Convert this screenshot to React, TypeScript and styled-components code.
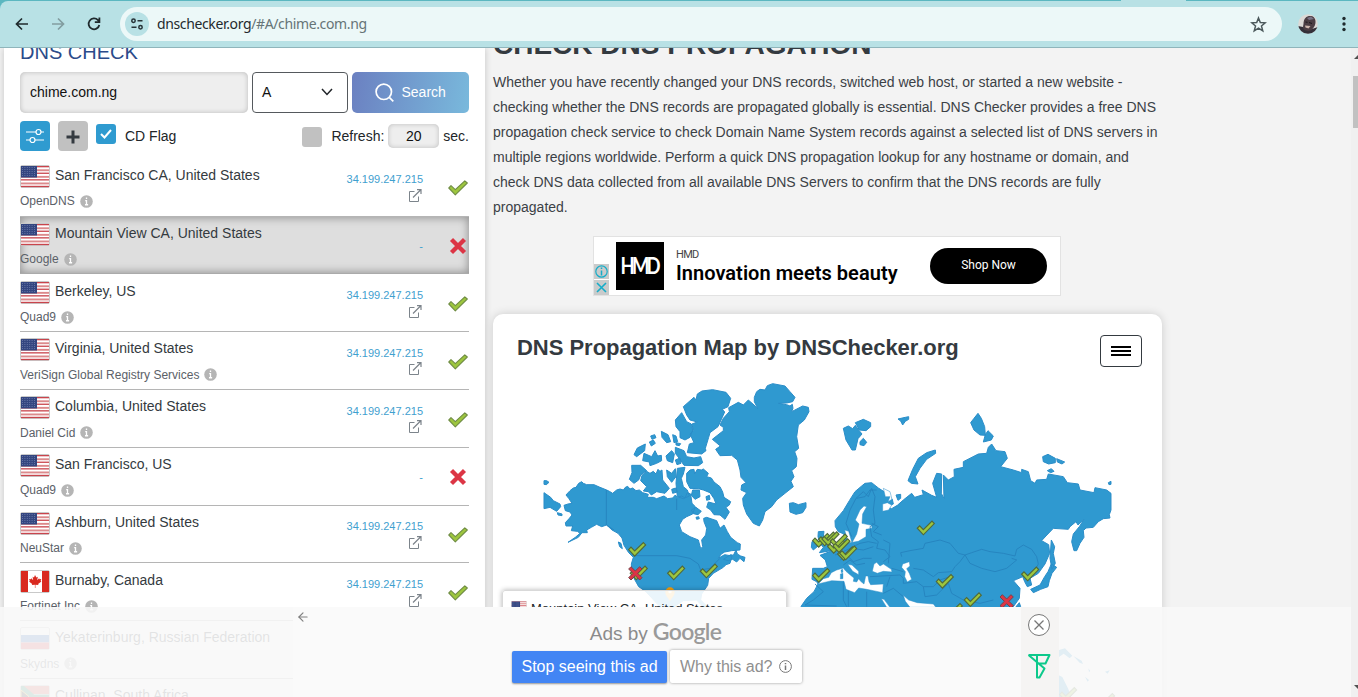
import React from 'react';
import styled, { createGlobalStyle } from 'styled-components';
import { ArrowLeft } from 'lucide-react';

const GlobalStyle = createGlobalStyle`
  * { box-sizing: border-box; }
  body { margin: 0; overflow: hidden; background: #f3f3f3; font-family: "Liberation Sans", Arial, sans-serif; font-size: 14px; color: #343a40; }
  h1, h2, h3, p { margin: 0; }
  svg { display: block; flex: none; }
`;

const Screen = styled.div`
  width: 1358px; height: 697px; overflow: hidden;
  display: flex; flex-direction: column; position: relative;
`;

/* ---------- browser bar ---------- */
const Chrome = styled.header`
  height: 48px; flex: none; background: #5bb7c0; padding-top: 1px; position: relative;
`;
const TabFoot = styled.i`
  position: absolute; left: 1121px; top: 0; width: 65px; height: 2px; background: #b8e1e5;
`;
const Toolbar = styled.div`
  height: 47px; background: #b8e1e5; border-radius: 8px 0 0 0; border-bottom: 1px solid #8fb5bb;
  display: flex; align-items: center; padding: 0 6px 0 14px;
`;
const NavIcons = styled.div`
  display: flex; gap: 20px; width: 106px; color: #1f2a2d; align-items: center;
`;
const UrlPill = styled.div`
  flex: none; width: 1162px; height: 34px; border-radius: 17px; background: #ecf8f8;
  display: flex; align-items: center; padding: 0 15px 0 5px;
`;
const SiteInfo = styled.span`
  width: 24px; height: 24px; border-radius: 50%; background: #b8e1e5; display: grid; place-items: center;
`;
const Url = styled.span`
  margin-left: 8px; flex: 1; font: 14px/20px "Noto Sans", sans-serif; color: #1f2a2d; letter-spacing: -0.37px;
  span { color: #667477; }
`;
const ToolbarEnd = styled.div`
  flex: 1; display: flex; justify-content: space-between; align-items: center; padding-left: 16px;
`;

/* ---------- page ---------- */
const Page = styled.div`
  height: 649px; overflow: hidden; display: flex; align-items: flex-start; position: relative; padding-left: 4px;
`;
const Panel = styled.section`
  width: 481px; height: 700px; padding: 0 16px; background: #fff; flex: none;
  box-shadow: 0 0 7px rgba(0,0,0,.2);
`;
const PanelTitle = styled.h2`
  margin-top: -8px; font-weight: 400; font-size: 20px; line-height: 24px; color: #2b4b8a;
`;
const SearchRow = styled.div`
  display: flex; gap: 4px; margin-top: 8px; height: 41px; color: #111;
`;
const DomainField = styled.div`
  width: 228px; padding: 0 10px; border-radius: 5px; background: #eee; line-height: 41px;
  box-shadow: inset 0 0 5px rgba(0,0,0,.22);
`;
const TypeSelect = styled.div`
  width: 96px; border: 1px solid #55595d; border-radius: 4px; padding: 0 14px 1px 9px;
  display: flex; align-items: center; justify-content: space-between;
`;
const SearchButton = styled.div`
  width: 117px; border-radius: 5px; color: #fff; background: linear-gradient(100deg, #6b80c1, #79b9dc);
  display: flex; align-items: center; gap: 8px; padding: 0 0 1px 22.5px;
`;
const OptionRow = styled.div`
  display: flex; height: 30px; margin-top: 8px; color: #212529; line-height: 30px;
`;
const SquareButton = styled.span<{ $bg: string }>`
  width: 30px; height: 30px; border-radius: 4px; background: ${p => p.$bg}; margin-right: 8px;
  display: grid; place-items: center;
`;
const CheckBox = styled.span<{ $on?: boolean }>`
  width: 20px; height: 20px; margin: ${p => (p.$on ? '3px 9px 0 0' : '6px 9px 0 auto')}; border-radius: 3px;
  background: ${p => (p.$on ? '#2f9bd0' : '#c1c1c1')}; display: grid; place-items: center;
`;
const Seconds = styled.span`
  width: 51px; height: 24px; margin: 3px 4px 0; border-radius: 5px; background: #eee; color: #111;
  text-align: center; line-height: 24px; box-shadow: inset 0 0 5px rgba(0,0,0,.2);
`;
const ServerList = styled.div`padding-top: 7.8px;`;
const Row = styled.div<{ $active?: boolean }>`
  height: 57.8px; border-bottom: 1px solid ${p => (p.$active ? '#aaa' : '#b5b5b5')}; display: flex;
  ${p => p.$active && 'background: #dedede; box-shadow: inset 0 0 9px 1px rgba(0,0,0,.34);'}
`;
const Place = styled.div`flex: 1; padding-top: 6.2px;`;
const NameLine = styled.div`
  display: flex; gap: 5px; height: 23px; line-height: 21.4px; color: #343a40; white-space: nowrap;
`;
const Provider = styled.div`
  display: flex; align-items: center; gap: 5px; height: 15px; margin-top: 6px; font-size: 12px; color: #5b6168;
`;
const Result = styled.div`
  width: 90px; padding-top: 13.7px; font-size: 11px; line-height: 14px; color: #3fa0cf; white-space: nowrap;
  display: flex; flex-direction: column; align-items: flex-end; gap: 2.5px;
  svg { margin-right: 1px; }
`;
const NoResult = styled(Result)`padding-top: 22px;`;
const Status = styled.div<{ $fail?: boolean }>`
  width: 46px; display: flex; justify-content: flex-end; align-items: center;
  padding: ${p => (p.$fail ? '2px 0 0' : '2.4px 1px 0 0')};
`;

const Main = styled.main`width: 669px; margin-left: 8px; flex: none;`;
const PageTitle = styled.h1`
  margin-top: -20px; font-size: 28px; line-height: 34px; font-weight: 700; color: #343a40; white-space: nowrap;
`;
const Intro = styled.p`margin-top: 8px; line-height: 25px; color: #3b4146; white-space: nowrap;`;
const Ad = styled.div`
  width: 468px; height: 60px; margin: 16px 0 18px 100px; background: #fff; border: 1px solid #e2e2e2;
  display: flex; align-items: center; font-family: Roboto, sans-serif; color: #000;
`;
const AdMarks = styled.div`
  display: flex; flex-direction: column; gap: 1px; align-self: flex-end;
  svg { background: #c9cbcb; }
`;
const AdLogo = styled.div`
  width: 48px; height: 48px; margin: 0 12px 0 7px; background: #000; color: #fff; display: grid; place-items: center;
  span { font: 700 22px/24px Lato, sans-serif; letter-spacing: -3.4px; transform: translateX(-1px) scaleX(.84); }
`;
const AdText = styled.div`
  flex: 1; font-size: 20px; line-height: 22px; font-weight: 600; letter-spacing: .04px; white-space: nowrap; padding-bottom: 1px;
  small { display: block; font-size: 11px; line-height: 14px; font-weight: 400; color: #444; letter-spacing: -.7px; }
`;
const AdButton = styled.div`
  width: 117px; height: 36px; margin-right: 13px; border-radius: 18px; background: #000; color: #fff;
  font-size: 12px; line-height: 34px; text-align: center;
`;
const MapCard = styled.section`
  height: 440px; background: #fff; border-radius: 10px; box-shadow: 0 0 10px rgba(0,0,0,.16); position: relative;
`;
const MapHead = styled.div`
  height: 61px; padding: 21px 20px 0 24px; display: flex; justify-content: space-between;
  h3 { font-size: 22px; line-height: 26px; color: #343a40; letter-spacing: -.025px; }
`;
const MenuButton = styled.div`
  width: 42px; height: 32px; border: 1px solid #343a40; border-radius: 4px; display: flex; flex-direction: column;
  align-items: center; justify-content: center; gap: 2px;
  i { width: 20px; height: 2px; background: #000; }
`;
const MapPopup = styled.div`
  position: absolute; left: 9px; top: 276px; width: 285px; height: 60px; border: 1px solid #d9d9d9; border-radius: 3px;
  background: rgba(255,255,255,.9); box-shadow: 0 0 5px rgba(0,0,0,.3); padding: 10px 8px; display: flex; gap: 4px;
  font-size: 13px; line-height: 15px; color: #212529;
`;

const ScrollTrack = styled.aside`
  position: absolute; right: 0; top: 48px; width: 7px; height: 649px; background: #f0f0f0;
  display: flex; flex-direction: column; align-items: flex-end; padding: 7px 0 8px;
`;
const ScrollThumb = styled.i`width: 5px; height: 52px; margin: 17px 0 auto; background: #c1c1c1;`;

/* ---------- anchored ad overlay ---------- */
const Anchor = styled.div`
  position: absolute; left: 0; top: 607px; width: 1351px; height: 90px; display: flex;
  background: rgba(248,248,248,.89);
`;
const AnchorAd = styled.div`
  margin-left: 293px; width: 728px; background: #fafafa; display: flex; padding: 3px 0 0 3px; color: #808080;
`;
const AnchorBody = styled.div`
  margin-left: 202px; padding-top: 9px;
`;
const AdsBy = styled.div`
  width: 287px; height: 24px; display: flex; align-items: baseline; justify-content: center; gap: 5px;
  font-size: 19px; line-height: 24px; color: #8b8b8b;
  b { font: 600 23px/24px Lato, sans-serif; color: #9a9a9a; letter-spacing: -.7px; }
`;
const AnchorButtons = styled.div`display: flex; gap: 3px; margin-top: 7px; font-size: 16px; color: #8f8f8f;`;
const StopButton = styled.div`
  width: 155px; height: 32px; margin-top: 1px; background: #4285f4; color: #fff; border-radius: 2px; text-align: center; line-height: 32px;
  box-shadow: 0 1px 2px rgba(0,0,0,.4);
`;
const WhyButton = styled.div`
  width: 132px; height: 33px; background: #fff; border-radius: 2px; box-shadow: 0 0 3px rgba(0,0,0,.4);
  display: flex; align-items: center; gap: 7px; padding-left: 10px;
`;
const AnchorSide = styled.div`
  width: 38px; background: #f5f4f3; display: flex; flex-direction: column; align-items: center; gap: 17px; padding: 7px 2px 0 0;
`;

/* ---------- drawings ---------- */
type Country = 'us' | 'ca' | 'ru' | 'za';
const Flag = ({ c, w = 30, h = 23 }: { c: Country; w?: number; h?: number }) => (
  <svg width={w} height={h} viewBox="0 0 30 23">
    <rect x=".5" y=".5" width="29" height="22" rx="1.5" fill="#fff" stroke="#c9c9c9" />
    {c === 'us' && (<>
      {[1, 4.3, 7.6, 10.9, 14.2, 17.5, 20.8].map((y, i) => <rect key={y} x="1" y={y} width="28" height={i % 2 ? 1.9 : 1.3} fill={i % 2 ? '#dc8a8c' : '#c9444c'} />)}
      <rect x="1" y="1" width="16" height="11.500" fill="#344680" />
      {[2.5, 4.5, 6.5, 8.5, 10.5].map(y => <path key={y} d={`M2 ${y}H16`} stroke="#7482ae" strokeWidth=".8" strokeDasharray="1 1.4" />)}
    </>)}
    {c === 'ca' && (<>
      <path d="M1 1h7v21H1zM22 1h7v21h-7z" fill="#d9291f" />
      <path d="M15 5l1.4 2.6 1.4-.8-.6 3.4 1.9-1.9.4 1 1.8-.3-.7 1.9.8.5-3.3 2.7.4 1-3.1-.4V18h-.5v-3.300l-3.100.4.4-1L9 11.400l.8-.5-.7-1.900 1.800.3.4-1 1.900 1.900-.6-3.400 1.400.8z" fill="#d9291f" />
    </>)}
    {c === 'ru' && <><path d="M1 8h28v7.500H1z" fill="#2360b8" /><path d="M1 15.500h28V22H1z" fill="#d8343c" /></>}
    {c === 'za' && <><path d="M1 1h28v8H12z" fill="#d8493e" /><path d="M1 22h28v-8H12z" fill="#253f8e" /><path d="M1 1h3l10 8.500h15v4H14L4 22H1z" fill="#15845a" /><path d="M1 5l8 6.500L1 18z" fill="#222" stroke="#e8b830" /></>}
  </svg>
);

const Info = () => (
  <svg width="13" height="13" viewBox="0 0 12 12"><circle cx="6" cy="6" r="5.800" fill="#b5b5b5" /><path d="M6 2.300v1.400M4.800 5.200H6V9M4.600 9h2.900" stroke="#fff" strokeWidth="1.200" fill="none" /></svg>
);
const External = () => (
  <svg width="14" height="13" viewBox="0 0 14 13" fill="none" stroke="#7c848b"><path d="M6.500 2.500H1.500v10h9V7.500" /><path d="M5 8.500L12.500 1M9 .6h4V5" strokeWidth="1.200" /></svg>
);
const checkPath = 'M.8 8L3 5.700 7.300 9.700 16.800.8 19.300 3 7.300 14.800z';
const Check = () => (
  <svg width="20" height="16" viewBox="0 0 20 16"><path d={checkPath} fill="#9dc63e" stroke="#6f8c43" strokeWidth="1.100" strokeLinejoin="round" /></svg>
);
const Cross = () => (
  <svg width="20" height="18" viewBox="0 0 20 18"><path d="M2.500 2.500L15.500 15.500M15.500 2.500L2.500 15.500" stroke="#dc3545" strokeWidth="4.300" /></svg>
);

const land = [
  // North America
  'M228 555L240 542 250 534 258 532 266 520 275 515 280 520 290 524 312 524 330 532 350 540 358 544 368 550 380 540 390 537 400 540 406 532 413 529 420 537 428 534 438 542 448 540 458 548 475 553 472 562 490 562 500 566 522 558 533 566 548 564 556 555 562 562 575 558 585 564 592 548 602 552 606 580 616 590 608 612 590 620 578 628 568 645 575 665 600 680 625 690 632 716 638 710 635 690 647 675 650 655 642 635 641 625 650 622 680 632 690 655 702 645 712 665 722 682 742 698 751 702 750 720 725 722 704 726 694 732 684 745 704 734 726 738 720 760 708 764 700 772 690 778 670 790 656 805 653 826 635 852 632 870 650 888 642 894 620 870 580 872 560 885 540 920 500 880 468 845 446 830 432 805 425 790 424 762 430 742 416 728 402 706 396 684 384 670 366 660 350 645 335 650 320 643 304 652 290 660 292 668 276 668 265 682 234 697 256 682 270 670 262 664 244 662 248 648 228 648 226 638 238 625 246 615 240 606 226 602 222 586 234 582 246 580 236 565z',
  // Greenland
  'M793 275L793 262 800 245 810 238 825 240 832 227 848 221 885 228 900 245 915 262 908 275 890 279 865 280 890 284 900 288 907 283 909 295 905 305 938 288 955 292 957 305 943 330 925 345 920 380 926 415 914 425 921 445 919 470 905 482 912 500 903 514 910 530 885 550 860 570 845 590 825 605 818 630 808 648 790 640 770 612 760 585 758 565 770 548 753 540 755 525 768 518 753 502 750 480 742 450 725 436 690 437 677 418 691 408 667 388 700 362 700 352 690 345 700 325 718 305 716 293 745 277 760 285 775 270 792 285 803 295z',
  // Canadian Arctic
  'M580 290L612 262 618 270 622 252 636 243 668 239 708 247 722 265 714 290 697 298 704 306 684 350 660 368 656 382 646 415 648 422 635 432 592 428 598 402 612 398 600 372 610 362 606 342 622 336 600 330 590 315z',
  'M575 308L590 335 604 342 608 360 600 382 585 390 570 383 570 365 558 350 556 330z',
  'M514 364L534 374 542 395 530 398 516 382zM548 374L558 378 563 395 552 398zM482 378l12-4 4 9-12 5zM478 396l12-6 6 10-12 8zM558 398l14 3-4 6-10-2z',
  'M466 402L464 422 440 440 432 434 442 414zM462 430L485 440 495 422 503 438 514 436 515 452 500 460 480 467 478 456 458 452z',
  'M528 438L545 422 553 432 548 458 532 452zM556 412L582 422 590 440 612 444 632 440 638 458 625 467 582 466 570 448 556 430zM556 450l14-6 3 16-12 4z',
  'M425 466L452 466 470 482 452 495 446 510 432 520 418 508 426 488z',
  'M456 496L470 484 480 490 490 484 498 492 504 478 510 484 516 480 518 510 538 535 525 550 500 545 484 555 475 545 460 543 470 530 452 512z',
  'M530 480L545 490 556 476 558 500 545 517 532 500zM562 475L585 472 580 492 574 505 580 530 592 540 598 558 580 566 562 560 558 520z',
  'M590 490L600 480 612 478 614 492 622 478 634 480 640 477 655 490 650 500 664 504 672 516 690 530 698 546 702 562 722 575 718 585 708 592 718 606 705 628 690 615 672 614 662 600 650 592 655 576 678 582 672 566 660 548 640 540 625 536 600 535 590 515z',
  'M608 540L628 540 630 560 615 568 604 556zM545 538l12-4 5 12-14 4zM604 600l14-8 16 12-10 10-14-3zM648 560l10-4 2 12-10 3zM618 622l8-2 2 6-8 2z',
  'M700 748L722 734 730 736 738 720 742 732 752 738 765 742 762 755 750 745 740 756 728 748 715 752zM385 696l8 4 4 16-8-6zM162 512l8 0 7 5-8 7-7-1zM162 548L182 562 190 572 210 582 212 590 200 604 180 592 162 596zM202 608l14 4 0 5-12-2z',
  // Iceland, Svalbard, Franz Josef, Novaya Zemlya
  'M898 580L910 578 925 584 948 578 948 592 938 608 918 613 900 606z',
  'M1060 355L1075 348 1088 356 1096 346 1106 360 1116 372 1104 386 1096 420 1086 420 1068 390zM1096 338L1120 328 1142 338 1142 350 1128 362 1108 360zM1110 395l10-10 10 12-8 10-12-3zM1224 327L1246 322 1256 320 1256 328 1246 334 1238 345 1232 333z',
  'M1336 420L1337 430 1310 448 1290 475 1276 500 1284 522 1264 520 1254 512 1268 478 1285 445 1310 428z',
  'M1452 325L1464 310 1474 325 1484 350 1486 376 1470 375 1452 360 1442 338zM1494 362L1510 378 1504 390 1480 396 1486 374zM1658 440L1674 433 1696 445 1696 458 1676 462 1660 455zM1700 446l24 10-8 6-14-6zM1672 482l12-6 8 8-10 4zM1855 518l8-4 0 9-6 1zM1218 555l14-2 0 12-8 6z',
  // British Isles
  'M985 665L1002 664 1000 680 1010 690 1018 710 1024 722 988 728 1000 712 990 700 984 680zM966 695L982 690 984 708 970 720 964 712z',
  // Eurasia with Africa
  'M1035 632L1060 602 1078 572 1095 545 1115 528 1125 520 1145 518 1165 534 1190 550 1207 568 1210 582 1190 590 1205 596 1222 586 1240 570 1265 550 1274 562 1300 554 1296 540 1325 556 1340 562 1328 520 1340 490 1355 492 1354 550 1362 566 1360 495 1375 510 1393 500 1392 478 1420 472 1420 455 1465 432 1490 430 1495 412 1505 402 1518 422 1545 425 1552 445 1532 470 1570 480 1595 488 1595 478 1615 485 1622 512 1635 520 1640 510 1670 508 1675 492 1720 500 1732 518 1765 522 1770 540 1812 548 1815 533 1850 540 1863 550 1863 600 1858 614 1860 624 1840 626 1825 635 1810 652 1788 654 1780 662 1782 682 1770 700 1760 722 1752 722 1745 695 1750 672 1768 650 1782 628 1764 645 1758 635 1740 650 1735 658 1690 655 1668 678 1655 692 1676 704 1679 730 1665 762 1645 790 1620 805 1625 825 1612 830 1604 815 1598 800 1580 808 1570 812 1590 835 1588 865 1570 890 1570 920 925 920 934 888 950 865 972 845 984 822 980 815 966 808 968 775 1000 775 1012 770 1006 750 990 736 1022 724 1038 700 1060 692 1062 672 1045 665 1036 650z',
  // Sakhalin and Japan
  'M1684 690L1694 710 1690 730 1696 760 1686 778 1680 745zM1684 762L1700 772 1686 790 1678 812 1674 830 1652 838 1630 848 1622 838 1650 825 1664 800 1674 785zM1578 890l10-12 4 12z',
];
const seas = [
  // Baltic, White Sea
  'M1086 698L1100 672 1107 642 1096 630 1110 600 1122 588 1130 590 1118 612 1116 640 1145 646 1146 655 1128 658 1128 680 1105 694 1080 698 1072 690 1064 660 1076 664z',
  'M1178 582L1192 578 1205 585 1196 600 1178 604z',
  // Mediterranean, Adriatic
  'M984 822L1000 806 1016 802 1024 788 1040 780 1060 774 1068 784 1082 796 1092 804 1090 814 1100 816 1106 806 1112 814 1122 822 1127 798 1134 798 1137 815 1142 824 1180 822 1178 848 1150 842 1130 838 1106 834 1094 848 1068 838 1062 814 1025 812z',
  'M1073 763L1086 765 1106 784 1106 794 1088 784z',
  // Black Sea, Caspian, Red Sea, Persian Gulf
  'M1147 784L1152 762 1160 757 1170 768 1180 762 1186 766 1204 778 1206 786 1180 784 1162 790z',
  'M1238 762L1258 755 1260 768 1250 776 1258 790 1265 808 1252 816 1244 800 1246 785 1235 772z',
  'M1174 866L1182 868 1200 892 1190 892zM1240 856L1256 870 1282 878 1330 882 1338 892 1260 892 1246 874z',
  'M1180 535L1186 560 1200 560 1194 575 1206 568 1200 545z',
];
const borders = 'M349 540V645L372 660M430 737H560L600 745 625 762 632 780 660 775 690 745M560 566V600M1085 680L1068 640 1080 600 1098 565 1120 545 1135 560 1145 535 1155 560 1150 600 1155 640 1140 650 1145 680 1165 695 1160 715 1185 720 1200 740 1180 755M1100 565L1125 560 1140 540 1160 540M1035 735L1060 725 1080 715 1110 700 1135 695 1160 700M1050 750L1075 740 1090 755 1120 745 1145 745M1060 765L1080 750 1100 765 1125 760M1080 715L1120 720 1150 710M1235 740L1232 728 1260 722 1300 715 1305 700 1350 690 1380 700 1405 730 1425 735 1410 755 1395 770 1385 785 1345 788 1330 800 1300 780 1270 775M1425 735L1445 728 1475 718 1500 725 1540 730 1575 738 1580 718 1600 705 1625 718 1640 740 1645 762 1630 790M1425 735L1440 760 1475 775 1515 785 1550 775 1580 750 1565 745M1205 775L1240 785M1140 800L1230 795 1240 805 1240 820 1280 815 1300 830 1330 830 1350 810 1380 800M1300 830L1305 860 1340 855 1375 820 1385 850 1420 870 1470 880 1510 870M1180 850L1210 835 1240 860M1200 800L1190 830M1060 815V870L1070 890M1075 842V890M1130 845V890M975 822L1000 845 970 870 945 885 1040 888M1180 690L1200 700 1195 760M1145 640L1165 650 1150 665 1175 675';
const greens: [number, number][] = [
  [415, 697], [420, 768], [532, 768], [630, 762], [967, 670], [985, 666], [995, 665], [1012, 688], [1020, 672], [1028, 686], [1042, 710], [1048, 708],
  [967, 775], [1281, 633], [1338, 793], [1422, 848], [1365, 880], [1594, 771],
];
const MapCheck = ({ x, y }: { x: number; y: number }) => (
  <path transform={`translate(${x} ${y}) scale(2.65)`} d="M.3 8.200L3 5.500 7.200 9.800 17 .2 19.600 2.900 7.200 15.600z" fill="#9dc63e" stroke="#50693a" strokeWidth="1.300" />
);
const MapCross = ({ x, y }: { x: number; y: number }) => (
  <path transform={`translate(${x} ${y})`} d="M0 7L7 0 20 13 33 0 40 7 27 20 40 33 33 40 20 27 7 40 0 33 13 20z" fill="#dc3545" stroke="#77424a" strokeWidth="3" />
);
const WorldMap = () => (
  <svg width="669" height="322" viewBox="493 375 669 322">
    <g transform="translate(490 310) scale(.33333)">
      <path d={land.join('')} fill="#2f99d0" stroke="#2a8dc8" strokeWidth="3" strokeLinejoin="round" />
      <path d={seas.join('')} fill="#fff" stroke="#2a8dc8" strokeWidth="1.500" strokeLinejoin="round" />
      <path d="M1051 792l8-2 0 16-8 1zM1053 780l5-3 1 10-5 1z" fill="#2f99d0" stroke="#2a8dc8" strokeWidth="1" />
      <path d={borders} fill="none" stroke="#2582bd" strokeWidth="2.600" strokeLinejoin="round" />
      <path d="M1707 1020l18-5 22 22-8 8-18-14-14 10zM1750 1038l25 14 4 10-10-4zM1795 1075l6 8-4 3zM1845 1085l14-4-6 10zM1785 1100l12 10-4 5zM1705 1095l12 6 18 36 10 30h-40z" fill="#2f99d0" />
      {greens.map(([x, y]) => <MapCheck key={`${x}-${y}`} x={x} y={y} />)}
      <MapCheck x={1708} y={1132} /><MapCheck x={1822} y={1150} />
      <MapCross x={416} y={770} /><MapCross x={1530} y={854} />
      <path d="M540 874c-5-12-14-16-14-28a14 14 0 0 1 28 0c0 12-9 16-14 28z" fill="#f59e0b" />
      <circle cx="540" cy="845" r="5" fill="#fff0cf" />
    </g>
  </svg>
);

const IP = '34.199.247.215';
const servers: { name: string; provider: string; c: Country; fail?: boolean; active?: boolean }[] = [
  { name: 'San Francisco CA, United States', provider: 'OpenDNS', c: 'us' },
  { name: 'Mountain View CA, United States', provider: 'Google', c: 'us', fail: true, active: true },
  { name: 'Berkeley, US', provider: 'Quad9', c: 'us' },
  { name: 'Virginia, United States', provider: 'VeriSign Global Registry Services', c: 'us' },
  { name: 'Columbia, United States', provider: 'Daniel Cid', c: 'us' },
  { name: 'San Francisco, US', provider: 'Quad9', c: 'us', fail: true },
  { name: 'Ashburn, United States', provider: 'NeuStar', c: 'us' },
  { name: 'Burnaby, Canada', provider: 'Fortinet Inc', c: 'ca' },
  { name: 'Yekaterinburg, Russian Federation', provider: 'Skydns', c: 'ru' },
];

const BrowserBar = () => (
  <Chrome>
    <TabFoot />
    <Toolbar>
      <NavIcons>
        <svg width="16" height="16" viewBox="0 0 16 16" fill="none" stroke="#1f2a2d" strokeWidth="1.700"><path d="M14 8H3M8 2.500L2.500 8 8 13.500" /></svg>
        <svg width="16" height="16" viewBox="0 0 16 16" fill="none" stroke="#829da0" strokeWidth="1.700"><path d="M2 8h11M8 2.500L13.500 8 8 13.500" /></svg>
        <svg width="16" height="16" viewBox="0 0 16 16" fill="none" stroke="#1f2a2d" strokeWidth="1.800"><path d="M13.300 9A5.400 5.400 0 1 1 12 4.200L13.500 5.700M13.400 1.500V6.200H8.800" /></svg>
      </NavIcons>
      <UrlPill>
        <SiteInfo>
          <svg width="14" height="14" viewBox="0 0 14 14" fill="none" stroke="#263236" strokeWidth="1.500"><circle cx="3.500" cy="3.800" r="1.700" /><path d="M7.500 3.800h5M1.500 10.200h5" /><circle cx="10.500" cy="10.200" r="1.700" /></svg>
        </SiteInfo>
        <Url>dnschecker.org<span>/#A/chime.com.ng</span></Url>
        <svg width="17" height="17" viewBox="0 0 16 16" fill="none" stroke="#4b585b" strokeWidth="1.400"><path d="M8 1.800l1.700 4.300 4.700.3-3.600 3 1.200 4.500L8 11.400l-4 2.500 1.200-4.500-3.600-3 4.700-.3z" /></svg>
      </UrlPill>
      <ToolbarEnd>
        <svg width="20" height="20" viewBox="0 0 20 20">
          <clipPath id="face"><circle cx="10" cy="10" r="9.800" /></clipPath>
          <g clipPath="url(#face)">
            <rect width="20" height="20" fill="#dcd9d6" /><path d="M0 12l5 1 4 3 5-1 6-2v7H4L0 15z" fill="#343039" />
            <path d="M5.500 10C5.500 4 9 1.500 13 2s5.500 5 4 9-5 7-9 5.500-3-3.500-2.500-6.500z" fill="#4b3d43" /><path d="M9 4l4-1.500 3 2.500-5 1z" fill="#7a7385" /><path d="M7 11.500l5.500.5-2 2.500-3-1z" fill="#cdb5ac" /><path d="M11 8.500l3 1M7.500 8l2 .3" stroke="#1c171b" />
          </g>
        </svg>
        <svg width="16" height="16" viewBox="0 0 16 16" fill="#1f2a2d"><circle cx="8" cy="2.500" r="1.700" /><circle cx="8" cy="8" r="1.700" /><circle cx="8" cy="13.500" r="1.700" /></svg>
      </ToolbarEnd>
    </Toolbar>
  </Chrome>
);

const ServerRow = ({ name, provider, c, fail, active }: (typeof servers)[number]) => (
  <Row $active={active}>
    <Place>
      <NameLine><Flag c={c} />{name}</NameLine>
      <Provider>{provider}{provider && <Info />}</Provider>
    </Place>
    {fail ? <NoResult>-</NoResult> : <Result>{IP}<External /></Result>}
    <Status $fail={fail}>{fail ? <Cross /> : <Check />}</Status>
  </Row>
);

const DnsPanel = () => (
  <Panel>
    <PanelTitle>DNS CHECK</PanelTitle>
    <SearchRow>
      <DomainField>chime.com.ng</DomainField>
      <TypeSelect>A<svg width="12" height="8" viewBox="0 0 12 8" fill="none" stroke="#212529" strokeWidth="1.500"><path d="M1 1l5 5.500L11 1" /></svg></TypeSelect>
      <SearchButton>
        <svg width="19" height="19" viewBox="0 0 19 19" fill="none" stroke="#fff" strokeWidth="1.700"><circle cx="8.800" cy="8.800" r="7.700" /><path d="M14.300 14.300l4 4" /></svg>
        Search
      </SearchButton>
    </SearchRow>
    <OptionRow>
      <SquareButton $bg="#2f9bd0">
        <svg width="18" height="16" viewBox="0 0 18 16" fill="none" stroke="#fff" strokeWidth="1.200"><path d="M0 4h10M15 4h3M0 12h4M9 12h9" /><circle cx="12.500" cy="4" r="2.500" /><circle cx="6.500" cy="12" r="2.500" /></svg>
      </SquareButton>
      <SquareButton $bg="#c1c1c1">
        <svg width="14" height="16" viewBox="0 0 14 16" stroke="#343a40" strokeWidth="3"><path d="M.5 9h13M7 2.500v13" /></svg>
      </SquareButton>
      <CheckBox $on><svg width="12" height="10" viewBox="0 0 12 10" fill="none" stroke="#fff" strokeWidth="2"><path d="M1 5l3.500 3.500L11 1" /></svg></CheckBox>
      CD Flag
      <CheckBox />
      Refresh:
      <Seconds>20</Seconds>
      sec.
    </OptionRow>
    <ServerList>
      {servers.map(s => <ServerRow key={s.name} {...s} />)}
      <ServerRow name="Cullinan, South Africa" provider="" c="za" fail />
    </ServerList>
  </Panel>
);

export default function App() {
  return (
    <Screen>
      <GlobalStyle />
      <BrowserBar />
      <Page>
        <DnsPanel />
        <Main>
          <PageTitle>CHECK DNS PROPAGATION</PageTitle>
          <Intro>
            Whether you have recently changed your DNS records, switched web host, or started a new website -<br />
            checking whether the DNS records are propagated globally is essential. DNS Checker provides a free DNS<br />
            propagation check service to check Domain Name System records against a selected list of DNS servers in<br />
            multiple regions worldwide. Perform a quick DNS propagation lookup for any hostname or domain, and<br />
            check DNS data collected from all available DNS Servers to confirm that the DNS records are fully<br />
            propagated.
          </Intro>
          <Ad>
            <AdMarks>
              <svg width="15" height="15" viewBox="0 0 15 15" fill="none" stroke="#15adc9" strokeWidth="1.200"><circle cx="7.500" cy="7.500" r="5.700" /><path d="M7.500 6.500v5M7.500 3.500v1.500" strokeWidth="1.500" /></svg>
              <svg width="15" height="15" viewBox="0 0 15 15" fill="none" stroke="#15adc9" strokeWidth="1.600"><path d="M3 3l9 9M12 3l-9 9" /></svg>
            </AdMarks>
            <AdLogo><span>HMD</span></AdLogo>
            <AdText><small>HMD</small>Innovation meets beauty</AdText>
            <AdButton>Shop Now</AdButton>
          </Ad>
          <MapCard>
            <MapHead>
              <h3>DNS Propagation Map by DNSChecker.org</h3>
              <MenuButton><i /><i /><i /></MenuButton>
            </MapHead>
            <WorldMap />
            <MapPopup><Flag c="us" w={16} h={12} />Mountain View CA, United States</MapPopup>
          </MapCard>
        </Main>
      </Page>
      <ScrollTrack>
        <svg width="4" height="4" viewBox="0 0 4 4"><path d="M0 4l4-4v4z" fill="#505050" /></svg>
        <ScrollThumb />
        <svg width="4" height="4" viewBox="0 0 4 4"><path d="M0 0h4v4z" fill="#505050" /></svg>
      </ScrollTrack>
      <Anchor>
        <AnchorAd>
          <ArrowLeft size={14} strokeWidth={2} />
          <AnchorBody>
            <AdsBy>Ads by <b>Google</b></AdsBy>
            <AnchorButtons>
              <StopButton>Stop seeing this ad</StopButton>
              <WhyButton>Why this ad?
                <svg width="13" height="13" viewBox="0 0 13 13" fill="none" stroke="#777"><circle cx="6.500" cy="6.500" r="5.900" /><path d="M6.500 5.500v4.500M6.500 3v1.300" strokeWidth="1.500" /></svg>
              </WhyButton>
            </AnchorButtons>
          </AnchorBody>
        </AnchorAd>
        <AnchorSide>
          <svg width="22" height="22" viewBox="0 0 22 22" fill="#fff" stroke="#777"><circle cx="11" cy="11" r="10.500" /><path d="M6.500 6.500l9 9M15.500 6.500l-9 9" strokeWidth="1.300" /></svg>
          <svg width="24" height="26" viewBox="0 0 24 26" fill="none" stroke="#0cc98b" strokeWidth="2" strokeLinejoin="round"><path d="M1.500 2h21l-4 8.500H10M1.500 2L17.500 15.500 12.500 24.500H10V2" /></svg>
        </AnchorSide>
      </Anchor>
    </Screen>
  );
}
